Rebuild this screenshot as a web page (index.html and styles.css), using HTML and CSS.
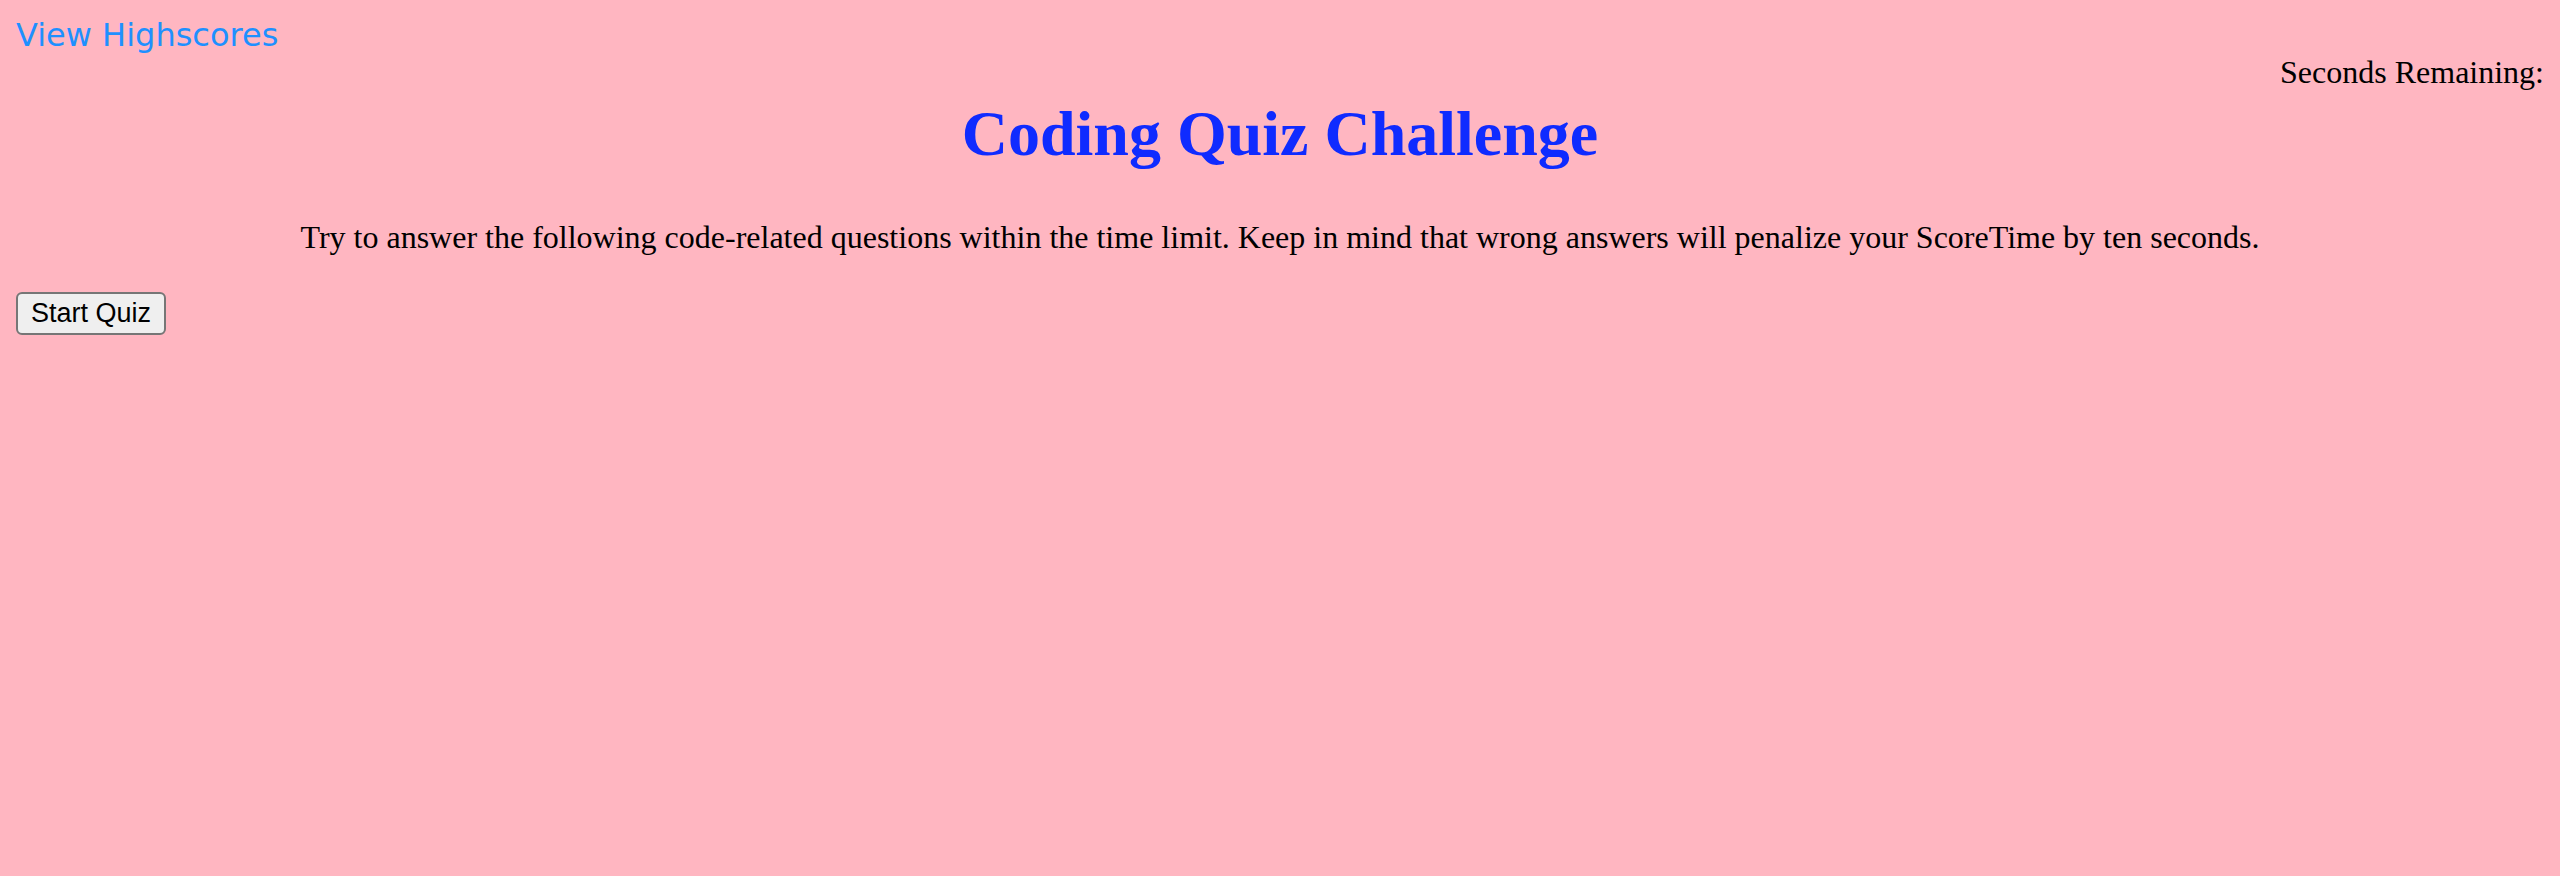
FILE: index.html
```html
<!DOCTYPE html>
<html lang="en">
<head>
<meta charset="utf-8">
<title>Coding Quiz Challenge</title>
<link rel="stylesheet" href="styles.css">
</head>
<body>
<header class="top">
  <a class="scores-link" href="#">View Highscores</a>
  <div class="timer">Seconds Remaining: <span class="time"></span></div>
</header>
<main class="intro">
  <h1 class="title">Coding Quiz Challenge</h1>
  <p class="lead">Try to answer the following code-related questions within the time limit. Keep in mind that wrong answers will penalize your ScoreTime by ten seconds.</p>
  <div class="actions"><button class="start-btn" type="button">Start Quiz</button></div>
</main>
</body>
</html>
```
FILE: styles.css
```css
html {
  background: #ffb6c1;
}
body {
  margin: 16px;
  background: #ffb6c1;
  font-family: "Liberation Serif", "Times New Roman", serif;
  font-size: 32px;
  color: #000;
}
.top {
  display: block;
}
.scores-link {
  display: block;
  font-family: "DejaVu Sans", Verdana, sans-serif;
  font-size: 32px;
  color: #1e90ff;
  text-decoration: none;
}
.timer {
  float: right;
  font-size: 32px;
}
.title {
  text-align: center;
  font-size: 64px;
  font-weight: bold;
  color: #0f2bff;
  margin: 43px 0 48px;
}
.lead {
  text-align: center;
  font-size: 32px;
  margin: 32px 0 36px;
}
.actions {
  margin: 0;
}
.start-btn {
  font-family: "Liberation Sans", Arial, sans-serif;
  font-size: 27px;
  color: #000;
  background: #efefef;
  border: 2px solid #767676;
  border-radius: 6px;
  padding: 4px 13px;
}
```
